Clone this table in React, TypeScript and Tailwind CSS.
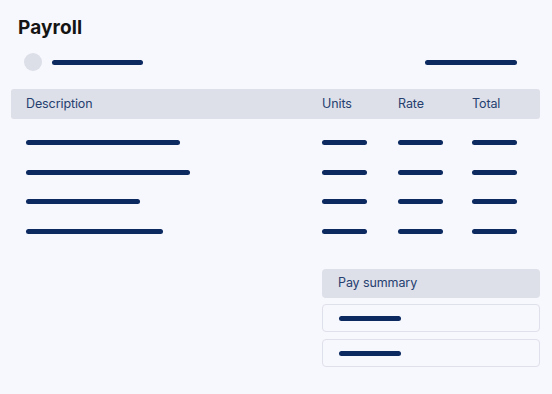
import React from "react";

const rows = [154, 164, 114, 137];

const Bar = ({ w }: { w: number | string }) => (
	<div className="h-[5px] rounded-full bg-[#0c2a60]" style={{ width: w }} />
);

const App = () => {
	return (
		<div className="w-[552px] h-[394px] bg-[#f7f8fd] pt-[15px] pl-[11px] pr-[12px] font-['Inter',sans-serif] overflow-hidden">
			<div className="ml-[7px] h-[26px] text-[19px] leading-[26px] font-bold text-[#141414] tracking-[0.1px]">
				Payroll
			</div>

			<div className="mt-[12px] h-[18px] flex items-center">
				<div className="ml-[13px] w-[18px] h-[18px] rounded-full bg-[#dcdee8]" />
				<div className="ml-[10px]">
					<Bar w={91} />
				</div>
				<div className="ml-auto mr-[23px]">
					<Bar w={92} />
				</div>
			</div>

			<div className="mt-[18px] h-[30px] bg-[#dddfe9] rounded-[3px] px-[15px] grid grid-cols-[296px_76px_74px_1fr] items-center text-[12.5px] tracking-[-0.1px] text-[#25406f]">
				<span>Description</span>
				<span>Units</span>
				<span>Rate</span>
				<span>Total</span>
			</div>

			<div className="pt-[9px] px-[15px]">
				{rows.map((w, i) => (
					<div key={i} className="h-[29.5px] grid grid-cols-[296px_76px_74px_1fr] items-center">
						<Bar w={w} />
						<Bar w={45} />
						<Bar w={45} />
						<Bar w={45} />
					</div>
				))}
			</div>

			<div className="mt-[23px] ml-auto w-[218px] flex flex-col">
				<div className="h-[29px] bg-[#dddfe9] rounded-[4px] pl-[16px] flex items-center text-[12.5px] tracking-[-0.1px] text-[#25406f]">
					Pay summary
				</div>
				<div className="mt-[6px] h-[28px] border border-[#dfe1ea] rounded-[4px] pl-[16px] flex items-center">
					<Bar w={62} />
				</div>
				<div className="mt-[7px] h-[28px] border border-[#dfe1ea] rounded-[4px] pl-[16px] flex items-center">
					<Bar w={62} />
				</div>
			</div>
		</div>
	);
};

export default App;
